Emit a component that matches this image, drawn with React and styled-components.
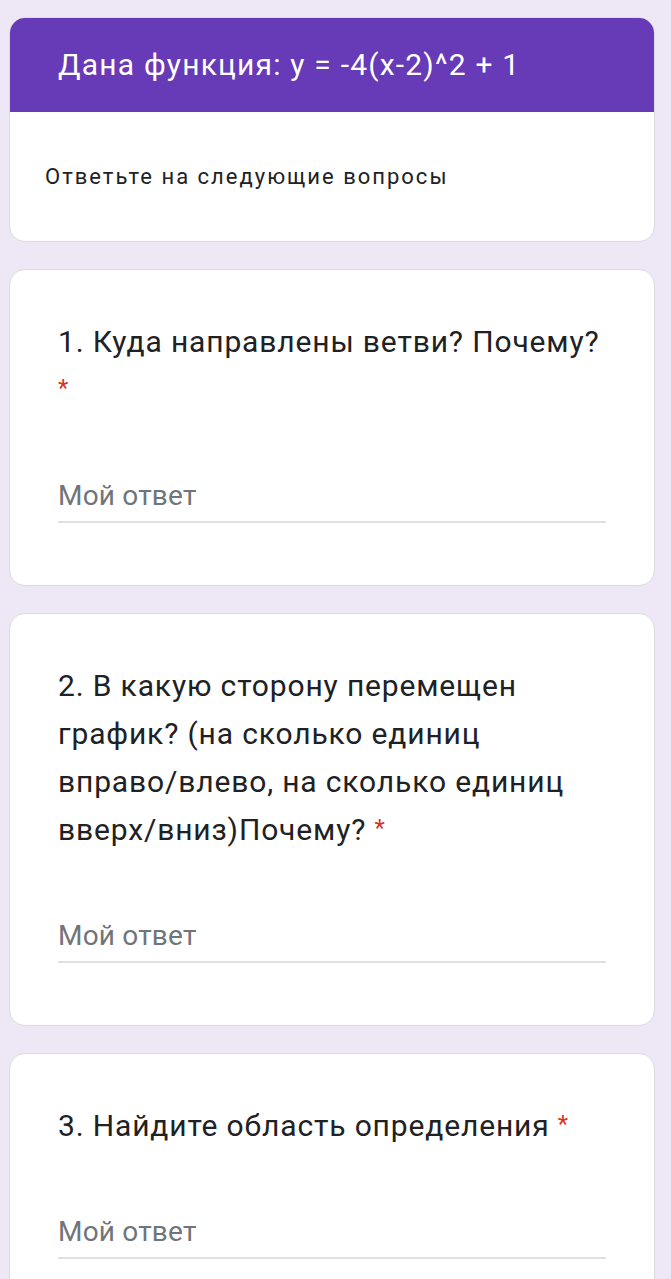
import React from "react";
import styled, { createGlobalStyle } from "styled-components";

const COLORS = {
  page: "#ede7f6",
  purple: "#673ab7",
  border: "#dadce0",
  text: "#202124",
  hint: "#70757a",
  red: "#d93025",
};

const GlobalStyle = createGlobalStyle`
  html, body {
    margin: 0;
    padding: 0;
    background: ${COLORS.page};
  }
  body {
    font-family: Roboto, "Noto Sans", Arial, sans-serif;
    color: ${COLORS.text};
  }
`;

const questions = [
  { id: 1, parts: ["1. Куда направлены ветви? Почему?"], breakStar: true },
  {
    id: 2,
    parts: [
      "2. В какую сторону перемещен график? (на сколько единиц ",
      <NoWrap key="a">вправо/влево,</NoWrap>,
      " на сколько единиц ",
      <NoWrap key="b">вверх/вниз)Почему?</NoWrap>,
    ],
  },
  { id: 3, parts: ["3. Найдите область определения"] },
];

function NoWrap({ children }) {
  return <span style={{ whiteSpace: "nowrap" }}>{children}</span>;
}

const App = () => {
  return (
    <>
      <GlobalStyle />
      <Page>
        <HeaderCard>
          <Banner>
            <Title>Дана функция: y = -4(x-2)^2 + 1</Title>
          </Banner>
          <Description>Ответьте на следующие вопросы</Description>
        </HeaderCard>
        {questions.map((q) => (
          <Card key={q.id}>
            <Question>
              {q.parts}
              {q.breakStar ? <br /> : " "}
              <Star>*</Star>
            </Question>
            <AnswerField>Мой ответ</AnswerField>
          </Card>
        ))}
      </Page>
    </>
  );
};

const Page = styled.main`
  display: flex;
  flex-direction: column;
  gap: 27px;
  padding: 17px 16px 40px 9px;
`;

const Card = styled.section`
  background: #fff;
  border: 1px solid ${COLORS.border};
  border-radius: 16px;
  padding: 48px 48px 62px 48px;
  display: flex;
  flex-direction: column;
  gap: 55px;
`;

const HeaderCard = styled.section`
  background: #fff;
  border: 1px solid ${COLORS.border};
  border-radius: 16px;
  overflow: hidden;
  height: 225px;
  box-sizing: border-box;
`;

const Banner = styled.div`
  background: ${COLORS.purple};
  height: 95px;
  display: flex;
  align-items: center;
  padding: 0 48px;
  margin: -1px -1px 0;
`;

const Title = styled.h1`
  margin: 0;
  color: #fff;
  font-size: 30px;
  font-weight: 400;
  letter-spacing: 1.2px;
  padding-left: 1px;
`;

const Description = styled.p`
  margin: 53px 0 0 35px;
  font-size: 22px;
  letter-spacing: 2px;
  line-height: 24px;
`;

const Question = styled.h2`
  margin: 0;
  font-size: 30px;
  line-height: 48px;
  font-weight: 400;
  letter-spacing: 0.85px;
`;

const Star = styled.span`
  color: ${COLORS.red};
  font-size: 24px;
  vertical-align: top;
  position: relative;
  top: -2px;
`;

const AnswerField = styled.div`
  height: 54px;
  box-sizing: border-box;
  border-bottom: 2px solid #e0e0e0;
  color: ${COLORS.hint};
  font-size: 28px;
  letter-spacing: 0.2px;
  line-height: 54px;
`;

export default App;
